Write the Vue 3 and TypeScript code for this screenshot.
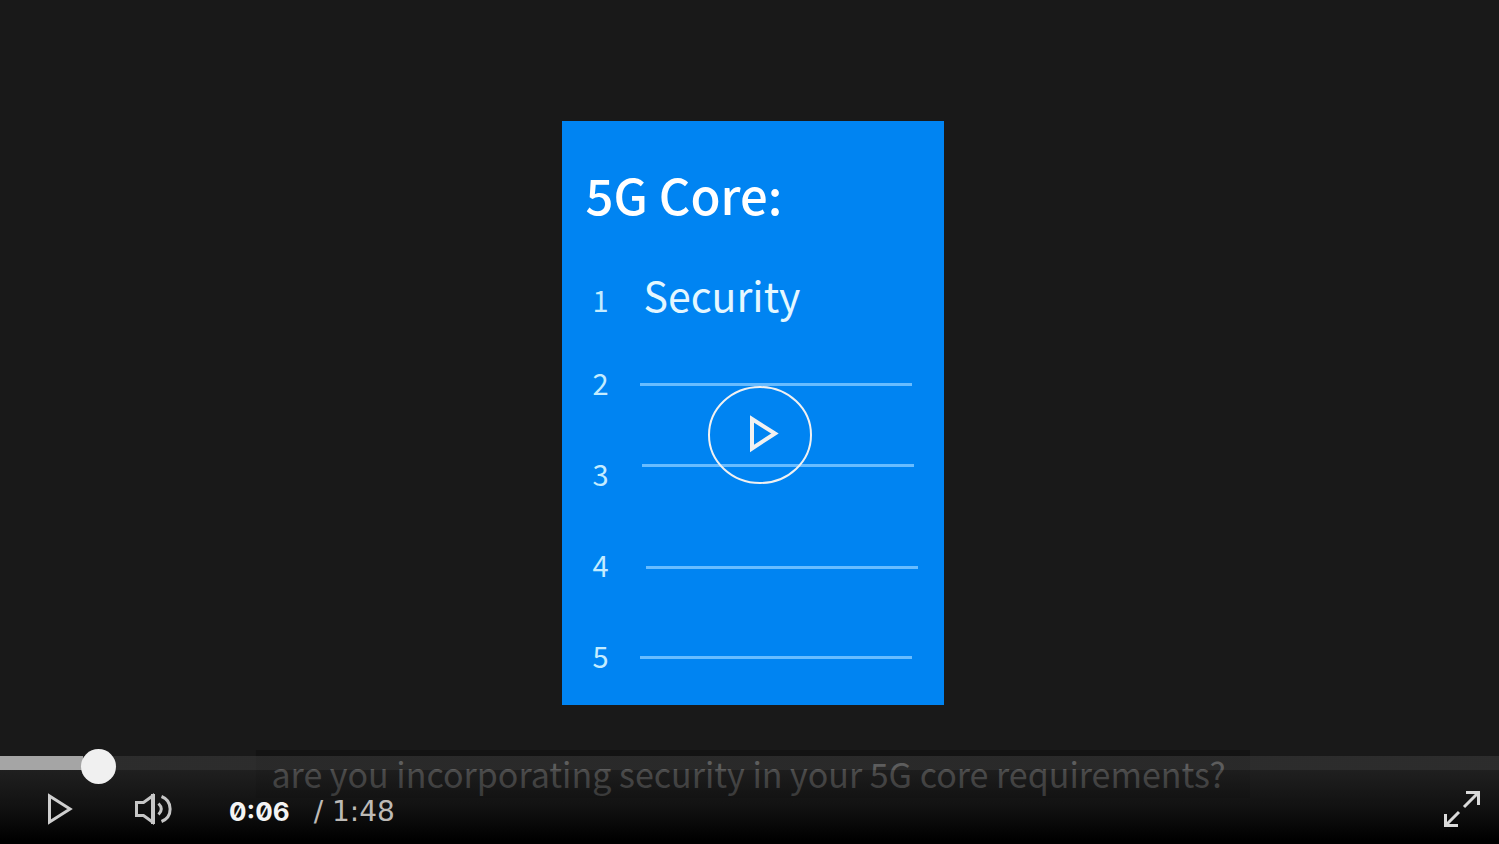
<script setup lang="ts">
import { computed, ref } from 'vue'

interface Topic {
  id: number
  label: string
}

const topics: Topic[] = [
  { id: 1, label: 'Security' },
  { id: 2, label: '' },
  { id: 3, label: '' },
  { id: 4, label: '' },
  { id: 5, label: '' },
]

const duration = 108
const position = ref(6)

const format = (s: number): string => {
  const whole = Math.floor(s)
  return `${Math.floor(whole / 60)}:${String(whole % 60).padStart(2, '0')}`
}

const elapsed = computed(() => format(position.value))
const total = format(duration)
const played = computed(() => `${(position.value / duration) * 100}%`)
</script>

<template>
  <main class="player">
    <section class="slide">
      <h1 class="title">5G Core:</h1>
      <ul class="topics">
        <li v-for="t in topics" :key="t.id" class="topic">
          <span class="number">{{ t.id }}</span>
          <span v-if="t.label" class="label">{{ t.label }}</span>
        </li>
      </ul>
      <svg class="rules" viewBox="0 0 382 584" aria-hidden="true">
        <path d="M78 263.500H350M80 344.500H352M84 446.500H356M78 536.500H350" />
      </svg>
      <button class="big-play" type="button" aria-label="Play video">
        <svg viewBox="0 0 104 98" width="104" height="98">
          <ellipse cx="52" cy="49" rx="51" ry="48" fill="none" stroke="#f1f1f1" stroke-width="2" />
          <path d="M44 33V62.500L67 47.500Z" fill="none" stroke="#f1f1f1" stroke-width="4" />
        </svg>
      </button>
    </section>

    <p class="caption">are you incorporating security in your 5G core requirements?</p>

    <div class="controls">
      <input
        v-model.number="position"
        class="seek"
        type="range"
        min="0"
        :max="duration"
        step="1"
        aria-label="Seek"
        :style="{ '--played': played }"
      />
      <div class="bar">
        <button class="icon play" type="button" aria-label="Play">
          <svg viewBox="0 0 26 34" width="26" height="34">
            <path d="M2.500 4V30L23 17Z" fill="none" stroke="#cfcfcf" stroke-width="3" />
          </svg>
        </button>
        <button class="icon volume" type="button" aria-label="Mute">
          <svg viewBox="0 0 38 34" width="38" height="34" fill="none" stroke="#c6c6c6">
            <path d="M1.500 10.500H8.500L17.500 4V30L8.500 23.500H1.500Z" stroke-width="3" />
            <path d="M18 2V32" stroke-width="4" />
            <path d="M23.500 11.500Q29 17 23.500 22.500" stroke-width="3" />
            <path d="M26.500 4.500C38 9 38 25 26.500 29.500" stroke-width="3" />
          </svg>
        </button>
        <span class="elapsed">{{ elapsed }}</span>
        <span class="total">/ {{ total }}</span>
        <button class="icon expand" type="button" aria-label="Full screen">
          <svg viewBox="0 0 38 38" width="38" height="38" fill="none" stroke="#dadada" stroke-width="3">
            <path d="M23 2.500H35.500V15M35 3L21 17M2.500 24V35.500H15M3 35L16 22" />
          </svg>
        </button>
      </div>
    </div>
  </main>
</template>

<style>
body {
  margin: 0;
  background: #191919;
}
</style>

<style scoped>
.player {
  position: relative;
  display: flex;
  align-items: center;
  justify-content: center;
  box-sizing: border-box;
  min-height: 100vh;
  padding: 0 0 18px 6px;
  overflow: hidden;
  background: #191919;
  font-family: "Noto Sans CJK SC", "Noto Sans", sans-serif;
}
.slide {
  position: relative;
  width: 382px;
  max-width: 100%;
  box-sizing: border-box;
  padding: 33px 24px 4px;
  background: #0084f2;
  color: #fff;
}
.title {
  margin: 0;
  height: 105px;
  font-size: 49px;
  line-height: 80px;
  font-weight: 500;
}
.topics {
  margin: 0;
  padding: 0;
  list-style: none;
}
.topic {
  display: flex;
  align-items: baseline;
  height: 91px;
  line-height: 91px;
}
.topic:first-child {
  height: 78px;
  line-height: 70px;
}
.number {
  width: 51px;
  padding-left: 7px;
  box-sizing: content-box;
  color: #c4ecff;
  font-size: 29px;
}
.label {
  color: #e4f7ff;
  font-size: 41px;
}
.rules {
  position: absolute;
  inset: 0;
  width: 100%;
  height: 100%;
  fill: none;
  stroke: #68bcff;
  stroke-width: 3;
}
button {
  padding: 0;
  border: 0;
  background: none;
  cursor: pointer;
}
button svg {
  display: block;
}
.big-play {
  position: absolute;
  left: 146px;
  top: 265px;
}
.caption {
  position: absolute;
  left: calc(50% + 3px);
  bottom: 46px;
  transform: translateX(-50%);
  margin: 0;
  padding: 0 24px 0 16px;
  background: #131313;
  color: #868686;
  font-size: 34px;
  line-height: 48px;
  white-space: nowrap;
}
.controls {
  position: absolute;
  left: 0;
  right: 0;
  bottom: 0;
}
.seek {
  position: relative;
  z-index: 1;
  display: block;
  width: 100%;
  height: 14px;
  margin: 0;
  appearance: none;
  background: transparent;
}
.seek::-webkit-slider-runnable-track {
  height: 14px;
  background: linear-gradient(
    90deg,
    #a5a5a5 var(--played),
    rgba(60, 60, 60, 0.55) var(--played)
  );
}
.seek::-webkit-slider-thumb {
  appearance: none;
  width: 35px;
  height: 35px;
  margin-top: -7px;
  border-radius: 50%;
  background: #f0f0f0;
}
.bar {
  display: flex;
  align-items: center;
  box-sizing: border-box;
  height: 74px;
  padding: 4px 18px 0 47px;
  background: linear-gradient(rgba(36, 36, 36, 0.6), rgba(14, 14, 14, 0.7) 50%, #000 95%);
}
.volume {
  margin-left: 62px;
}
.elapsed {
  margin-left: 56px;
  color: #f4f4f4;
  font: 700 26px/28px Inter, sans-serif;
  font-feature-settings: "zero";
}
.total {
  margin-left: 24px;
  color: #bdbab6;
  font: 28px/28px "DejaVu Sans", sans-serif;
}
.elapsed,
.total {
  padding-top: 6px;
}
.expand {
  margin-left: auto;
}
</style>
